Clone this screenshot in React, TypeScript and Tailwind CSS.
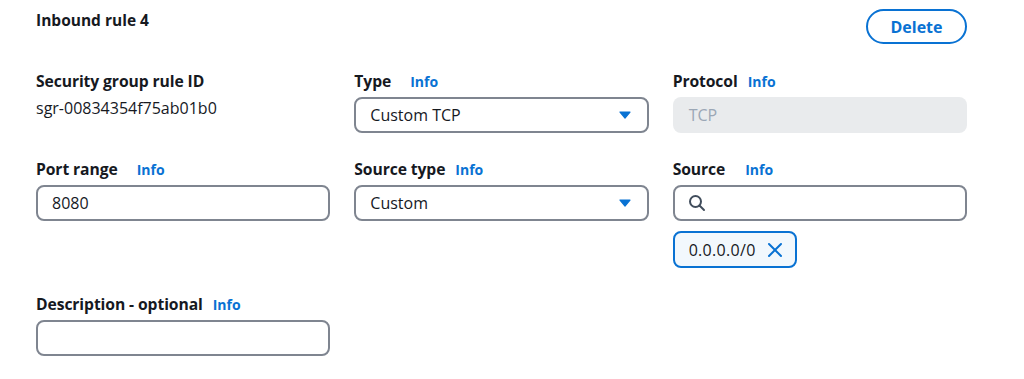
import React from "react";

const font = { fontFamily: '"Open Sans", "Noto Sans", Arial, sans-serif' };

function Label({ text, gap = "ml-[19px]" }: { text: string; gap?: string }) {
  return (
    <div className="flex items-baseline h-[20px] leading-[20px]">
      <span className="text-[15.7px] font-bold text-[#16191f] tracking-[-0.1px]">{text}</span>
      <span className={`${gap} text-[14px] font-bold text-[#0972d3]`}>Info</span>
    </div>
  );
}

function Caret() {
  return (
    <svg width="12" height="8" viewBox="0 0 12 8" className="shrink-0">
      <path d="M1 1 L11 1 L6 7 Z" fill="#0972d3" stroke="#0972d3" strokeWidth="1.2" strokeLinejoin="round" />
    </svg>
  );
}

function Select({ value }: { value: string }) {
  return (
    <div className="mt-[6px] h-[36px] rounded-[8px] border-2 border-[#7f8590] bg-white flex items-center justify-between pl-[14px] pr-[16px]">
      <span className="text-[16px] text-[#16191f]">{value}</span>
      <Caret />
    </div>
  );
}

function TextInput({ value = "" }: { value?: string }) {
  return (
    <div className="mt-[6px] h-[36px] rounded-[8px] border-2 border-[#7f8590] bg-white flex items-center pl-[14px]">
      <span className="text-[16px] text-[#16191f]">{value}</span>
    </div>
  );
}

export default function App() {
  return (
    <div className="w-[1024px] h-[379px] bg-white pl-[36px] pr-[57px] pt-[9px]" style={font}>
      <div className="flex justify-between items-start">
        <h2 className="mt-[1px] text-[15.5px] font-bold leading-[20px] text-[#16191f]">Inbound rule 4</h2>
        <button className="h-[35px] w-[101px] rounded-full border-2 border-[#0972d3] text-[#0972d3] text-[16px] font-bold">
          Delete
        </button>
      </div>

      <div className="mt-[27px] grid grid-cols-3 gap-x-6">
        <div className="flex flex-col">
          <div className="h-[20px] leading-[20px] text-[15.7px] font-bold text-[#16191f] tracking-[-0.1px]">
            Security group rule ID
          </div>
          <div className="mt-[7px] text-[16px] leading-[20px] text-[#16191f]">sgr-00834354f75ab01b0</div>
        </div>
        <div className="flex flex-col">
          <Label text="Type" />
          <Select value="Custom TCP" />
        </div>
        <div className="flex flex-col">
          <Label text="Protocol" gap="ml-[10px]" />
          <div className="mt-[6px] h-[36px] rounded-[8px] bg-[#e9ebed] flex items-center pl-[16px]">
            <span className="text-[16px] text-[#9ba7b6]">TCP</span>
          </div>
        </div>
      </div>

      <div className="mt-[26px] grid grid-cols-3 gap-x-6 items-start">
        <div className="flex flex-col">
          <Label text="Port range" />
          <TextInput value="8080" />
        </div>
        <div className="flex flex-col">
          <Label text="Source type" gap="ml-[10px]" />
          <Select value="Custom" />
        </div>
        <div className="flex flex-col">
          <Label text="Source" gap="ml-[20px]" />
          <div className="mt-[6px] h-[36px] rounded-[8px] border-2 border-[#7f8590] bg-white flex items-center pl-[13px]">
            <svg width="18" height="18" viewBox="0 0 18 18" fill="none" stroke="#414d5c" strokeWidth="2" strokeLinecap="round">
              <circle cx="7.5" cy="7.5" r="5.5" />
              <path d="M11.5 11.5 L16 16" />
            </svg>
          </div>
          <div className="mt-[10px] self-start h-[37px] rounded-[8px] border-2 border-[#0972d3] bg-[#f2f8fd] flex items-center pl-[14px] pr-[12px] gap-[11px]">
            <span className="text-[16px] tracking-[0.3px] text-[#16191f]">0.0.0.0/0</span>
            <svg width="16" height="16" viewBox="0 0 16 16" fill="none" stroke="#0972d3" strokeWidth="2" strokeLinecap="round">
              <path d="M2 2 L14 14 M14 2 L2 14" />
            </svg>
          </div>
        </div>
      </div>

      <div className="mt-[26px] grid grid-cols-3 gap-x-6">
        <div className="flex flex-col">
          <Label text="Description - optional" gap="ml-[10px]" />
          <TextInput />
        </div>
      </div>
    </div>
  );
}
